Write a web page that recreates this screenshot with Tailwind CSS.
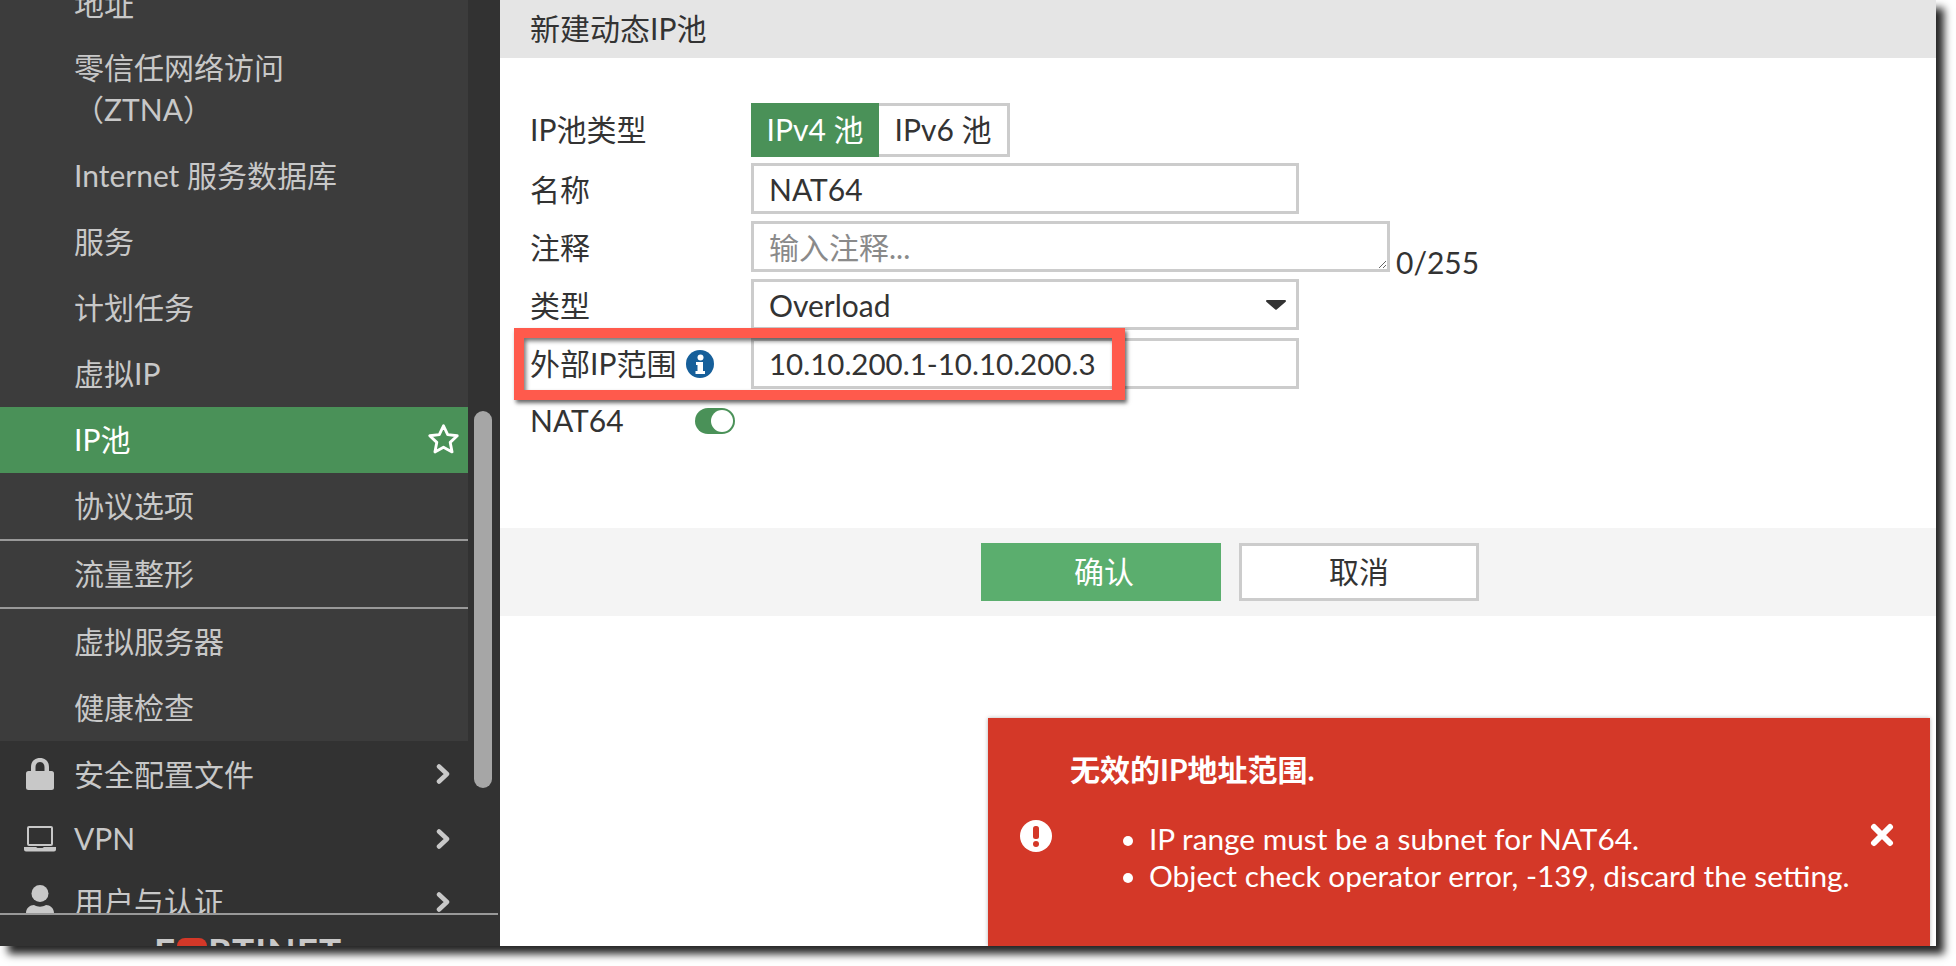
<!DOCTYPE html>
<html lang="zh">
<head>
  <meta charset="utf-8"/>
  <title>新建动态IP池</title>
  <script src="https://cdn.jsdelivr.net/npm/@tailwindcss/browser@4"></script>
</head>
<body class="bg-white w-[1956px] h-[966px] overflow-hidden">
  <div class="w-[1936px] h-[946px] flex overflow-hidden bg-white shadow-[8px_8px_8px_0px_rgba(0,0,0,0.85)] text-[30px] text-[#333333] font-['Lato','Noto_Sans_CJK_SC',sans-serif]">

    <!-- sidebar -->
    <aside class="w-[500px] h-full shrink-0 flex flex-col bg-[#323232] text-[#c8c8c8]">
      <div class="h-[913px] flex overflow-hidden shrink-0">
        <nav class="w-[468px] shrink-0 -mt-[28px]">
          <div class="bg-[#3c3c3c]">
            <a class="h-[66px] flex items-center pl-[74px] pb-[2px]">地址</a>
            <a class="h-[105px] flex items-center pl-[74px] pb-[5px] leading-[42px]">零信任网络访问<br/>（ZTNA）</a>
            <a class="h-[66px] flex items-center pl-[74px] pb-[2px]">Internet 服务数据库</a>
            <a class="h-[66px] flex items-center pl-[74px] pb-[2px]">服务</a>
            <a class="h-[66px] flex items-center pl-[74px] pb-[2px]">计划任务</a>
            <a class="h-[66px] flex items-center pl-[74px] pb-[2px]">虚拟IP</a>
            <a class="h-[66px] flex items-center justify-between pl-[74px] pr-[8px] pb-[2px] bg-[#4a9158] text-white">IP池
              <svg width="33" height="33" viewBox="0 0 30 30" fill="none" stroke="white" stroke-width="2.600" stroke-linejoin="round"><path d="M15 2.500l3.800 8 8.700 1.100-6.400 6 1.700 8.700-7.800-4.300-7.800 4.300 1.700-8.700-6.400-6 8.700-1.100z"/></svg>
            </a>
            <a class="h-[66px] flex items-center pl-[74px] pb-[2px]">协议选项</a>
            <div class="h-[2px] bg-[#999999]"></div>
            <a class="h-[66px] flex items-center pl-[74px] pb-[2px]">流量整形</a>
            <div class="h-[2px] bg-[#999999]"></div>
            <a class="h-[66px] flex items-center pl-[74px] pb-[2px]">虚拟服务器</a>
            <a class="h-[66px] flex items-center pl-[74px] pb-[2px]">健康检查</a>
          </div>
          <a class="h-[66px] flex items-center justify-between pr-[18px]">
            <span class="flex items-center">
              <span class="w-[74px] flex justify-center pl-[6px]">
                <svg width="28" height="32" viewBox="0 0 28 32" fill="#c8c8c8"><path d="M14 0C8.200 0 5 4 5 9v5h4.500V9c0-3 1.700-5 4.500-5s4.500 2 4.500 5v5H23V9c0-5-3.200-9-9-9z"/><rect x="0" y="13" width="28" height="19" rx="2.500"/></svg>
              </span>安全配置文件
            </span>
            <svg width="14" height="20" viewBox="0 0 14 20" fill="none" stroke="#c8c8c8" stroke-width="4.500" stroke-linecap="round" stroke-linejoin="round"><path d="M3 2.500l8 7.500-8 7.500"/></svg>
          </a>
          <a class="h-[63px] flex items-center justify-between pr-[18px]">
            <span class="flex items-center">
              <span class="w-[74px] flex justify-center pl-[6px]">
                <svg width="32" height="26" viewBox="0 0 32 26" fill="none"><rect x="4" y="1" width="24" height="18" rx="1" stroke="#c8c8c8" stroke-width="2"/><path d="M0 21h12l1.500 1h5l1.500-1h12v2.500a2 2 0 0 1-2 2H2a2 2 0 0 1-2-2z" fill="#c8c8c8"/></svg>
              </span>VPN
            </span>
            <svg width="14" height="20" viewBox="0 0 14 20" fill="none" stroke="#c8c8c8" stroke-width="4.500" stroke-linecap="round" stroke-linejoin="round"><path d="M3 2.500l8 7.500-8 7.500"/></svg>
          </a>
          <a class="h-[63px] flex items-center justify-between pr-[18px]">
            <span class="flex items-center">
              <span class="w-[74px] flex justify-center pl-[6px]">
                <svg width="28" height="34" viewBox="0 0 28 34" fill="#c8c8c8"><circle cx="14" cy="8.500" r="8.500"/><path d="M0 34v-6c0-5 4-8 8-8 2 1.200 4 1.700 6 1.700s4-.5 6-1.700c4 0 8 3 8 8v6z"/></svg>
              </span>用户与认证
            </span>
            <svg width="14" height="20" viewBox="0 0 14 20" fill="none" stroke="#c8c8c8" stroke-width="4.500" stroke-linecap="round" stroke-linejoin="round"><path d="M3 2.500l8 7.500-8 7.500"/></svg>
          </a>
        </nav>
        <div class="w-[18px] h-[377px] ml-[6px] mt-[411px] rounded-[9px] bg-[#a6a6a6] shrink-0"></div>
      </div>
      <div class="h-[2px] w-[498px] bg-[#999999] shrink-0"></div>
      <div class="flex-1 overflow-hidden pl-[154px] pt-[17px] flex items-start">
        <span class="text-[37px] leading-[38px] font-bold tracking-[1px] flex items-start text-[#c8c8c8]">F<span class="w-[30px] h-[20px] mx-[1px] mt-[6px] rounded-t-[8px] bg-[#d43828] shrink-0"></span>RTINET</span>
      </div>
    </aside>

    <!-- main -->
    <main class="flex-1 relative">
      <div class="h-[58px] bg-[#e5e5e5] flex items-center pl-[30px] pb-[2px]">新建动态IP池</div>

      <div class="h-[470px] pt-[45px] pl-[30px]">
        <div class="flex items-center h-[54px] mb-[6px]">
          <label class="w-[221px] shrink-0 pb-[2px]">IP池类型</label>
          <div class="flex h-full">
            <span class="w-[128px] flex items-center justify-center pb-[2px] bg-[#4a9158] text-white">IPv4 池</span>
            <span class="w-[131px] flex items-center justify-center pb-[2px] border-[3px] border-l-0 border-[#cccccc]">IPv6 池</span>
          </div>
        </div>
        <div class="flex items-center h-[51px] mb-[7px]">
          <label class="w-[221px] shrink-0 pt-[1px]">名称</label>
          <input value="NAT64" class="w-[548px] h-full px-[15px] pt-[1px] border-[3px] border-[#cccccc] outline-none"/>
        </div>
        <div class="flex items-center h-[51px] mb-[7px]">
          <label class="w-[221px] shrink-0 pt-[2px]">注释</label>
          <textarea rows="1" placeholder="输入注释..." class="w-[639px] h-full px-[15px] py-[4px] border-[3px] border-[#cccccc] outline-none leading-[38px] placeholder:text-[#8a8a8a]"></textarea>
          <span class="ml-[6px] mt-[32px]">0/255</span>
        </div>
        <div class="flex items-center h-[51px] mb-[8px]">
          <label class="w-[221px] shrink-0 pt-[1px]">类型</label>
          <div class="w-[548px] h-full px-[15px] pt-[1px] border-[3px] border-[#cccccc] flex items-center justify-between">Overload
            <svg width="20" height="10" viewBox="0 0 20 10" fill="#333333" class="-mr-[5px]"><path d="M1 0h18a1 1 0 0 1 .7 1.700L10.700 9.500a1 1 0 0 1-1.400 0L.300 1.700A1 1 0 0 1 1 0z"/></svg>
          </div>
        </div>
        <div class="flex items-center h-[51px] mb-[18px]">
          <label class="w-[221px] shrink-0 flex items-center gap-[10px]">外部IP范围
            <svg width="28" height="28" viewBox="0 0 28 28"><circle cx="14" cy="14" r="14" fill="#165f9a"/><circle cx="14.500" cy="7.500" r="3" fill="#ffffff"/><path d="M10 12h7v9h2v3H9.500v-3h2v-6H10z" fill="#ffffff"/></svg>
          </label>
          <input value="10.10.200.1-10.10.200.3" class="w-[548px] h-full px-[15px] text-[29.500px] border-[3px] border-[#cccccc] outline-none"/>
        </div>
        <div class="flex items-center h-[28px]">
          <label class="w-[165px] shrink-0 pb-[2px]">NAT64</label>
          <span class="w-[40px] h-[26px] rounded-full bg-[#4a9158] flex items-center justify-end pr-[2px]">
            <span class="w-[22px] h-[22px] rounded-full bg-white"></span>
          </span>
        </div>
      </div>

      <div class="h-[88px] bg-[#f4f4f4] flex items-center justify-center gap-[18px] pl-[24px]">
        <button class="w-[240px] h-[58px] pl-[6px] pb-[2px] bg-[#5bae6e] text-white">确认</button>
        <button class="w-[240px] h-[58px] pb-[2px] bg-white border-[3px] border-[#cccccc]">取消</button>
      </div>

      <!-- annotation box from the screenshot -->
      <div class="absolute left-[14px] top-[328px] w-[611px] h-[72px] border-t-[10px] border-l-[10px] border-b-[10px] border-r-[13px] border-[#ff5a4c] shadow-[2px_3px_4px_rgba(0,0,0,0.6),inset_2px_3px_4px_rgba(0,0,0,0.55)]"></div>

      <!-- error toast -->
      <div class="absolute right-[6px] bottom-0 w-[942px] h-[228px] bg-[#d43828] text-white flex shadow-[0_0_4px_rgba(0,0,0,0.3)]">
        <div class="w-[64px] shrink-0 flex justify-end pt-[102px]">
          <svg width="32" height="32" viewBox="0 0 32 32"><circle cx="16" cy="16" r="16" fill="#ffffff"/><rect x="13" y="6" width="6" height="13" rx="2.500" fill="#d43828"/><circle cx="16" cy="24" r="3" fill="#d43828"/></svg>
        </div>
        <div class="flex-1 pl-[18px] pt-[30px]">
          <div class="font-bold text-[30px] leading-[42px]">无效的IP地址范围.</div>
          <ul class="list-disc pl-[79px] mt-[30px] leading-[37px] text-[29.800px]">
            <li>IP range must be a subnet for NAT64.</li>
            <li>Object check operator error, -139, discard the setting.</li>
          </ul>
        </div>
        <div class="w-[64px] shrink-0 pt-[105px] pl-[4px]">
          <svg width="24" height="24" viewBox="0 0 24 24" stroke="#ffffff" stroke-width="6" stroke-linecap="round"><path d="M4 4l16 16M20 4L4 20"/></svg>
        </div>
      </div>
    </main>
  </div>
</body>
</html>
